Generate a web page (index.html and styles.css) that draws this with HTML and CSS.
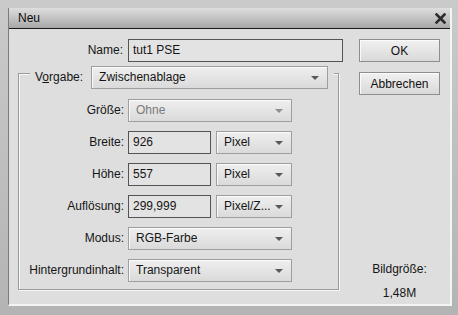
FILE: index.html
```html
<!DOCTYPE html>
<html lang="de">
  <head>
    <meta charset="UTF-8" />
    <title>Neu</title>
    <link rel="stylesheet" href="styles.css">
  </head>
  <body>
    <div class="dialog">
      <div class="titlebar">
        <span class="title">Neu</span>
        <svg class="close" width="11" height="11" viewBox="0 0 11 11">
          <path d="M1.5 1.5 L9.5 9.5 M9.5 1.5 L1.5 9.5" stroke="#2b2b2b" stroke-width="2.6" stroke-linecap="square"/>
        </svg>
      </div>

      <div class="content">
        <div class="form">
          <div class="name-row">
            <label class="label">Name:</label>
            <div class="input">tut1 PSE</div>
          </div>

          <div class="group">
            <div class="group-head">
              <label class="legend">V<u>o</u>rgabe:</label>
              <div class="select wide-preset">Zwischenablage<span class="arrow"></span></div>
            </div>

            <div class="rows">
              <label class="label">Größe:</label>
              <div class="select full disabled">Ohne<span class="arrow"></span></div>

              <label class="label">Breite:</label>
              <div class="pair">
                <div class="input short">926</div>
                <div class="select unit">Pixel<span class="arrow"></span></div>
              </div>

              <label class="label">Höhe:</label>
              <div class="pair">
                <div class="input short">557</div>
                <div class="select unit">Pixel<span class="arrow"></span></div>
              </div>

              <label class="label">Auflösung:</label>
              <div class="pair">
                <div class="input short">299,999</div>
                <div class="select unit">Pixel/Z...<span class="arrow"></span></div>
              </div>

              <label class="label">Modus:</label>
              <div class="select full">RGB-Farbe<span class="arrow"></span></div>

              <label class="label">Hintergrundinhalt:</label>
              <div class="select full">Transparent<span class="arrow"></span></div>
            </div>
          </div>
        </div>

        <div class="side">
          <button class="button">OK</button>
          <button class="button">Abbrechen</button>
          <div class="size-info">
            <p>Bildgröße:</p>
            <p>1,48M</p>
          </div>
        </div>
      </div>
    </div>
  </body>
</html>
```

FILE: styles.css
```css
/* Reset */
body,
p {
  margin: 0;
  padding: 0;
}

body {
  width: 458px;
  height: 315px;
  background: linear-gradient(#cacaca, #b4b4b4);
  font-family: "Liberation Sans", Arial, sans-serif;
  font-size: 12px;
  color: #151515;
  overflow: hidden;
}

/* Dialog window */
.dialog {
  margin: 8px 6px 0 8px;
  height: 298px;
  background: #dedede;
  border-left: 1px solid #7c7c7c;
  border-right: 2px solid #f4f4f4;
  border-bottom: 2px solid #f4f4f4;
  box-sizing: border-box;
}

/* Title bar */
.titlebar {
  height: 20px;
  display: flex;
  align-items: center;
  justify-content: space-between;
  padding: 0 4px 0 9px;
  background: linear-gradient(#dedede, #a8a8a8);
  border-bottom: 1px solid #1c1c1c;
}

.title {
  font-size: 12px;
  color: #0c0c0c;
}

/* Content area */
.content {
  display: flex;
}

.form {
  width: 334px;
  padding-top: 10px;
}

.label {
  text-align: right;
  line-height: 23px;
  white-space: nowrap;
}

.name-row {
  display: grid;
  grid-template-columns: 114px 215px;
  column-gap: 5px;
}

/* Inputs */
.input {
  height: 23px;
  line-height: 21px;
  padding-left: 4px;
  border: 1px solid #545454;
  background: #e3e3e3;
  box-sizing: border-box;
  white-space: nowrap;
}

.input.short {
  width: 83px;
}

/* Drop-down selects */
.select {
  position: relative;
  height: 23px;
  line-height: 21px;
  padding-left: 7px;
  border: 1px solid #9e9e9e;
  background: linear-gradient(#efefef, #dadada);
  box-shadow: inset 1px 1px 0 #fafafa;
  box-sizing: border-box;
  white-space: nowrap;
}

.arrow {
  position: absolute;
  right: 8px;
  top: 9px;
  width: 0;
  height: 0;
  border-left: 4px solid transparent;
  border-right: 4px solid transparent;
  border-top: 4px solid #585858;
}

.select.disabled {
  color: #7a7a7a;
}

.select.disabled .arrow {
  border-top-color: #8e8e8e;
}

.select.full {
  width: 164px;
}

.select.unit {
  width: 76px;
}

.select.wide-preset {
  width: 237px;
}

/* Preset group */
.group {
  margin: 11px 0 0 9px;
  width: 321px;
  height: 217px;
  box-sizing: border-box;
  border: 1px solid #9c9c9c;
  box-shadow: inset 1px 1px 0 #f6f6f6, 1px 1px 0 #f6f6f6;
}

.group-head {
  display: flex;
  align-items: center;
  gap: 8px;
  width: fit-content;
  margin: -8px 0 0 11px;
  padding: 0 6px 0 5px;
  background: #dedede;
}

.legend {
  line-height: 23px;
}

.rows {
  display: grid;
  grid-template-columns: 105px 164px;
  column-gap: 4px;
  row-gap: 9px;
  margin-top: 10px;
}

.pair {
  display: flex;
  gap: 5px;
}

/* Right column */
.side {
  display: flex;
  flex-direction: column;
  align-items: center;
  width: 81px;
  margin-left: 16px;
  padding-top: 10px;
  height: 262px;
}

.button {
  width: 81px;
  height: 23px;
  margin-bottom: 10px;
  border: 1px solid #8e8e8e;
  background: linear-gradient(#f1f1f1, #d9d9d9);
  box-shadow: inset 1px 1px 0 #fbfbfb;
  font-family: "Liberation Sans", Arial, sans-serif;
  font-size: 12px;
  color: #111;
}

.size-info {
  margin-top: auto;
  text-align: center;
  line-height: 16px;
}

.size-info p + p {
  margin-top: 8px;
}
```
